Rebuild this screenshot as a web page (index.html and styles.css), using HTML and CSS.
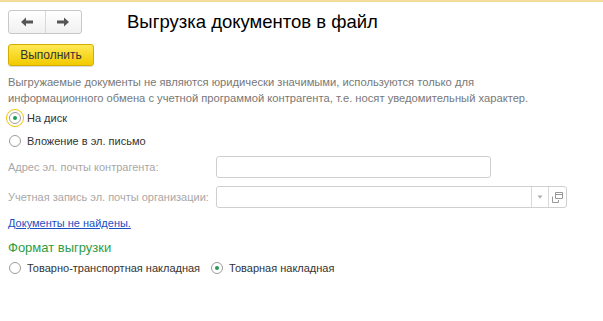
FILE: index.html
```html
<html>

<head>
    <link rel="stylesheet" href="styles.css">
</head>

<body>
    <div class="form">
        <!-- header -->
        <div class="header">
            <div class="nav">
                <span class="nav-btn">
                    <svg width="14" height="10" viewBox="0 0 14 10"><path d="M1 5 L6 0.5 L6 3.5 L13 3.5 L13 6.5 L6 6.5 L6 9.5 Z" fill="#555"/></svg>
                </span>
                <span class="nav-btn">
                    <svg width="14" height="10" viewBox="0 0 14 10"><path d="M13 5 L8 0.5 L8 3.5 L1 3.5 L1 6.5 L8 6.5 L8 9.5 Z" fill="#555"/></svg>
                </span>
            </div>
            <div class="title">Выгрузка документов в файл</div>
        </div>
        <div class="toolbar">
            <button class="run-button">Выполнить</button>
        </div>
        <div class="note">Выгружаемые документы не являются юридически значимыми, используются только для<br>информационного обмена с учетной программой контрагента, т.е. носят уведомительный характер.</div>
        <!-- where to put -->
        <div class="radio-list">
            <label class="radio focused"><span class="circle checked"></span>На диск</label>
            <label class="radio"><span class="circle"></span>Вложение в эл. письмо</label>
        </div>
        <div class="field-row">
            <div class="field-title">Адрес эл. почты контрагента:</div>
            <div class="input input-mail"></div>
        </div>
        <div class="field-row">
            <div class="field-title">Учетная запись эл. почты организации:</div>
            <div class="input input-account">
                <span class="input-fill"></span>
                <span class="input-btn">
                    <svg width="6" height="4" viewBox="0 0 6 4"><path d="M0.5 0.5 L5.5 0.5 L3 3.5 Z" fill="#aaa"/></svg>
                </span>
                <span class="input-btn">
                    <svg width="11" height="11" viewBox="0 0 11 11"><path d="M3.5 0.5 H10.5 V6.5 H3.5 Z M3.5 2.5 H10.5" fill="none" stroke="#999"/><path d="M0.5 4.5 V10.5 H6.5 V8" fill="none" stroke="#999"/></svg>
                </span>
            </div>
        </div>
        <div class="link-row">
            <a class="link" href="#">Документы не найдены.</a>
        </div>
        <!-- format -->
        <div class="group-title">Формат выгрузки</div>
        <div class="radio-row">
            <label class="radio"><span class="circle"></span>Товарно-транспортная накладная</label>
            <label class="radio"><span class="circle checked"></span>Товарная накладная</label>
        </div>
    </div>
</body>

</html>
```

FILE: styles.css
```css
* {
    margin: 0;
    padding: 0;
    box-sizing: border-box;
}

html {
    background: white;
}

body {
    font-family: "Liberation Sans", Arial, sans-serif;
    font-size: 11px;
    color: #4d4d4d;
    border-top: 2px solid #f1dc9a;
}

.form {
    padding: 0 8px;
}

/*header*/

.header {
    display: flex;
    align-items: center;
    padding-top: 8px;
}

.nav {
    display: flex;
    width: 74px;
    height: 24px;
    border: 1px solid #c8c8c8;
    border-radius: 3px;
    background: linear-gradient(#ffffff, #f0f0f0);
}

.nav-btn {
    flex: 1;
    display: flex;
    align-items: center;
    justify-content: center;
}

.nav-btn + .nav-btn {
    border-left: 1px solid #d8d8d8;
}

.title {
    margin-left: 45px;
    font-size: 18.5px;
    color: #000;
}

/*button*/

.toolbar {
    margin-top: 10px;
}

.run-button {
    width: 86px;
    height: 22px;
    font-family: "Liberation Sans", Arial, sans-serif;
    font-size: 12px;
    color: #333;
    background: linear-gradient(#ffe955, #f2ca00);
    border: 1px solid #d3ad00;
    border-radius: 3px;
    box-shadow: 0 1px 1px rgba(0, 0, 0, 0.15);
}

.note {
    margin-top: 8px;
    font-size: 11.2px;
    color: #787878;
    line-height: 16px;
    white-space: nowrap;
}

/*radio*/

.radio-list {
    margin-top: 2px;
    margin-left: -2px;
}

.radio {
    display: flex;
    align-items: center;
    height: 19px;
    padding-left: 1px;
    color: #333;
    white-space: nowrap;
}

.radio-list .radio + .radio {
    margin-top: 4px;
}

.radio.focused .circle {
    outline: 1px solid #f2c200;
    outline-offset: 2px;
}

.circle {
    width: 12px;
    height: 12px;
    margin: 0 6px 0 2px;
    border: 1px solid #9c9c9c;
    border-radius: 50%;
    background: white;
    display: flex;
    align-items: center;
    justify-content: center;
}

.circle.checked:before {
    content: '';
    width: 4px;
    height: 4px;
    border-radius: 50%;
    background: #1f9d55;
}

/*fields*/

.field-row {
    display: flex;
    align-items: center;
    margin-top: 6px;
}

.field-row + .field-row {
    margin-top: 8px;
}

.field-title {
    width: 208px;
    color: #a8a8a8;
    white-space: nowrap;
}

.input {
    height: 22px;
    border: 1px solid #cfcfcf;
    border-radius: 3px;
    background: white;
    display: flex;
}

.input-mail {
    width: 275px;
}

.input-account {
    width: 351px;
}

.input-fill {
    flex: 1;
}

.input-btn {
    width: 17px;
    border-left: 1px solid #d8d8d8;
    display: flex;
    align-items: center;
    justify-content: center;
}

.input-btn + .input-btn {
    width: 18px;
}

.link-row {
    margin-top: 9px;
    height: 14px;
}

.link {
    color: #1c4fc3;
}

.group-title {
    margin-top: 9px;
    font-size: 13px;
    color: #2f9c3f;
}

.radio-row {
    display: flex;
    margin-left: -2px;
    margin-top: 3px;
}

.radio-row .radio + .radio {
    margin-left: 8px;
}
```
